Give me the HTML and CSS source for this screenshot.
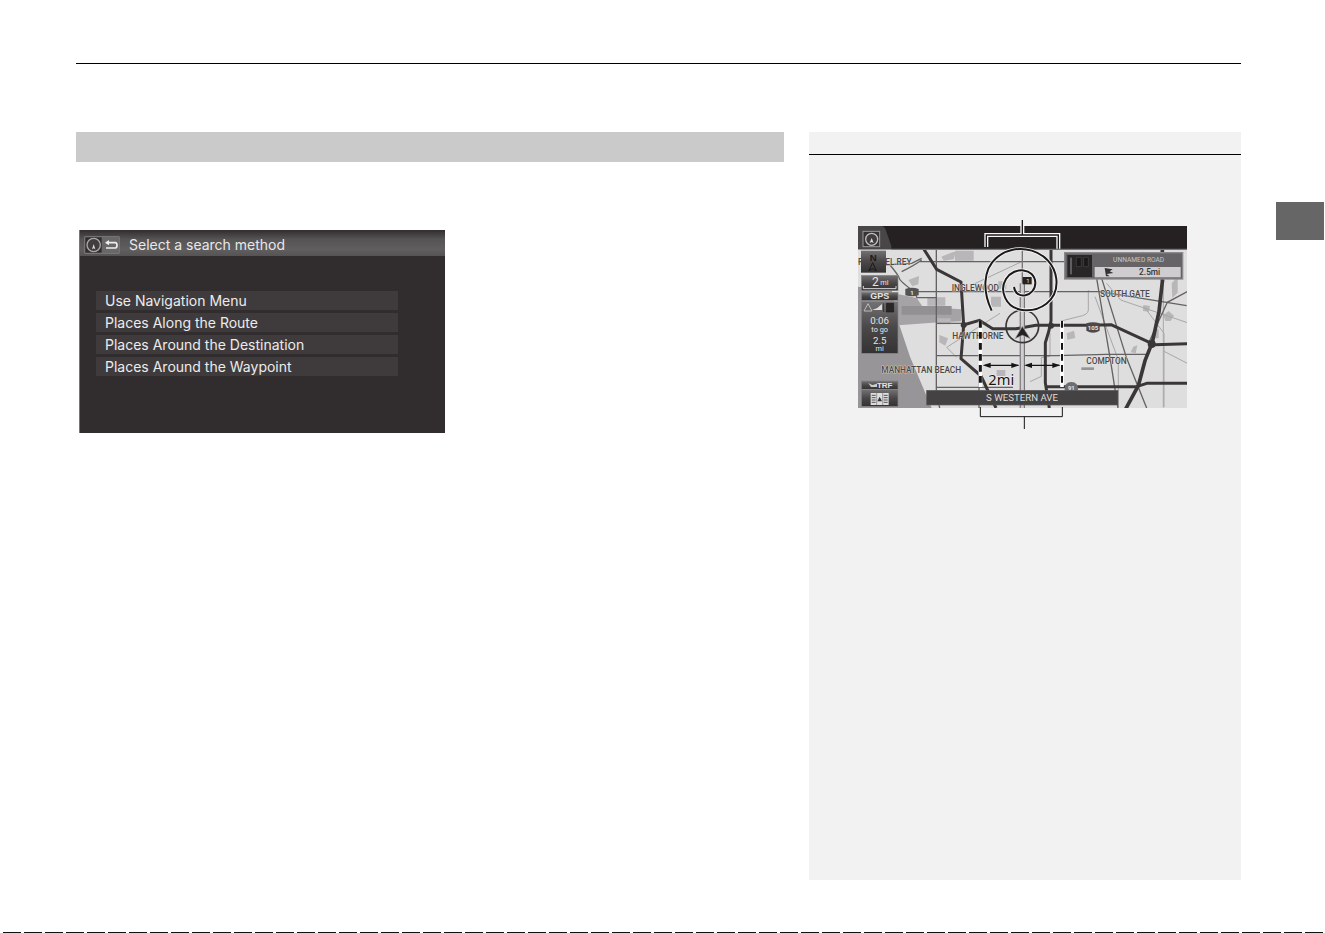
FILE: index.html
```html
<!DOCTYPE html>
<html lang="en">
<head>
<meta charset="utf-8">
<meta name="viewport" content="width=device-width, initial-scale=1">
<title>Select a search method</title>
<link rel="stylesheet" href="styles.css">
</head>
<body>
<div class="page">
  <header class="page-rule"></header>
  <div class="columns">
    <main class="content">
      <div class="section-bar"></div>
      <section class="device">
        <div class="device-head">
          <button class="back" type="button" aria-label="Back">
            <svg viewBox="0 0 108 54" aria-hidden="true">
              <rect x="1" y="1" width="106" height="52" rx="4" fill="#696767" stroke="#858383" stroke-width="2"/>
              <rect x="4" y="4" width="49" height="46" fill="#312d2e"/>
              <circle cx="29" cy="27" r="20" fill="#413d3e" stroke="#aaa8a8" stroke-width="4"/>
              <path d="M29 24l5 16-5-3-5 3z" fill="#ddd"/>
              <path d="M68 20h26q5 0 5 8t-5 8H66" fill="none" stroke="#eee" stroke-width="5"/>
              <path d="M63 20l12-8v16z" fill="#eee"/>
            </svg>
          </button>
          <h1 class="device-title">Select a search method</h1>
        </div>
        <div class="menu">
          <button class="menu-item" type="button">Use Navigation Menu</button>
          <button class="menu-item" type="button">Places Along the Route</button>
          <button class="menu-item" type="button">Places Around the Destination</button>
          <button class="menu-item" type="button">Places Around the Waypoint</button>
        </div>
      </section>
    </main>
    <aside class="notes">
      <div class="notes-head"></div>
      <svg class="map" viewBox="0 0 1035 675" role="img" aria-label="Route map with search range">
        <defs>
          <clipPath id="screen"><rect x="24" y="48" width="987" height="546"/></clipPath>
          <linearGradient id="btn" x1="0" y1="0" x2="0" y2="1">
            <stop offset="0" stop-color="#737172"/><stop offset=".5" stop-color="#4a4748"/><stop offset="1" stop-color="#353233"/>
          </linearGradient>
        </defs>
        <g clip-path="url(#screen)">
          <rect x="24" y="48" width="987" height="546" fill="#dedede"/>
          <path d="M24 230L125 240 148 345 180 440 245 594H24z" fill="#979597"/>
          <path d="M142 252l58 12 18 26 115 8v36l-85 4-104 8z" fill="#a5a3a5"/>
          <path d="M175 210l32-12-2 25-18 6zM232 262h54v25h-54zM274 140l45-18-8 26-30 4zM262 325h40v18h-40zM315 122h56v30h-56zM423 260h30v30h-30zM445 214h24v22h-24zM268 375l26 10-8 22-18-10zM440 480h26v18h-26zM940 315l16-12 16 14-10 16h-16zM880 285l20 3-3 17-18-2zM650 370l22-8 4 22-24 5zM910 362l16-5v28h-12zM965 220l18-20v48l-16 16zM850 410l12-4-5 24-15-3z" fill="#b8b6b8"/>
          <path d="M155 288h150v26H155z" fill="#929092"/>
          <g fill="none" stroke="#a9a7a9" stroke-width="3">
            <path d="M290 412l160-102M290 412l30 30M370 223L515 155M770 220l42 50 200 68M715 240v60q0 15-30 20l-55 14M735 260l70 190v142M940 210v382M882 290l60 80v222M540 515l34-16v-56l26-4V370M880 125l65 90M942 424l70 36M388 440v80"/>
          </g>
          <g fill="none" stroke="#656264" stroke-width="4">
            <path d="M259 120V540l10 54M210 155h440M200 245h550l260 42M259 340h80M259 437h360l150-4h120M259 532h230M387 500v94M740 205l42 250 22 140M755 205l75 240 60 149M1012 245l-60 32-55 120M100 165l85-5 30-15M120 165q25 30 28 40t45 40l8 18h58M155 185q40-20 60-35M24 155l76 10"/>
          </g>
          <g fill="none" stroke="#3b3739" stroke-width="9" stroke-linejoin="round">
            <path d="M222 118l38 60 73 38 8 130-8 100 60 52 45 96M340 345l48-14 40 25h70l60-10h160l65-2 130 60 107-3M603 118v215q-5 30-17 65v120l12 76M592 530h268l30-10h121"/>
            <path d="M937 120v95l-10 90-20 92-22 55-20 75-38 70" stroke-width="11"/>
          </g>
          <circle cx="341" cy="345" r="9" fill="#3b3739"/><circle cx="603" cy="347" r="9" fill="#3b3739"/><circle cx="905" cy="402" r="12" fill="#3b3739"/>
          <path d="M517 220v374" stroke="#777577" stroke-width="16"/>
          <path d="M517 220v374" stroke="#cfcdcf" stroke-width="9"/>
          <path d="M517 118v102" stroke="#777577" stroke-width="4"/>
          <g class="place">
            <text x="24" y="165">F</text><text x="106" y="165">EL REY</text>
            <text x="305" y="243">INGLEWOOD</text>
            <text x="307" y="388">HAWTHORNE</text>
            <text x="94" y="489">MANHATTAN BEACH</text>
            <text x="750" y="261">SOUTH GATE</text>
            <text x="709" y="462">COMPTON</text>
          </g>
          <path d="M694 472h38v8h-38z" fill="#969496"/>
          <path d="M166 237q20-8 40 0v19q-20 6-40 0z" fill="#555254"/><text x="186" y="254" class="tiny mid light">1</text>
          <path d="M709 340q20-7 40 0v22q-20 12-40 0z" fill="#4c494b"/><text x="729" y="359" class="tiny mid light">105</text>
          <path d="M644 542q-2-26 20-26t20 26z" fill="#6e6c6e"/><text x="664" y="539" class="tiny mid light">91</text>
          <path d="M24 48h987v70H24z" fill="#252122"/>
          <path d="M24 48h72q10 2 14 20l14 40v10H24z" fill="#494647"/>
          <path d="M124 118h887" stroke="#777577" stroke-width="4"/>
          <rect x="39" y="64" width="50" height="46" fill="#373334" stroke="#999799" stroke-width="3"/>
          <circle cx="65" cy="88" r="18" fill="#403d3e" stroke="#bebcbe" stroke-width="4"/>
          <path d="M65 84l6 15-6-3-6 3z" fill="#ddd"/>
          <rect x="33" y="122" width="75" height="66" fill="url(#btn)"/>
          <text x="70" y="153" class="mid north">N</text>
          <path d="M68 158l11 24-11-6-11 6z" fill="none" stroke="#1d191a" stroke-width="3"/>
          <g fill="url(#btn)" stroke="#888688" stroke-width="2">
            <rect x="34" y="196" width="110" height="46"/><rect x="34" y="247" width="110" height="24"/>
            <rect x="34" y="275" width="110" height="155"/><rect x="34" y="513" width="110" height="25"/><rect x="34" y="539" width="110" height="50"/>
          </g>
          <path d="M40 228v8h98v-8" fill="none" stroke="#ddd" stroke-width="3"/>
          <text x="66" y="227" class="big light">2</text><text x="91" y="225" class="small light">mi</text>
          <text x="89" y="268" class="mid gps light">GPS</text>
          <path d="M42 303l12-22 12 22z" fill="none" stroke="#bbb" stroke-width="3"/>
          <path d="M66 300h30v-18l-14 12z" fill="#ddd"/><path d="M101 280v26M109 280h22v26h-22z" stroke="#1e1b1c" stroke-width="2" fill="#292627"/>
          <g class="mid light">
            <text x="89" y="343" class="value">0:06</text><text x="89" y="366" class="small">to go</text>
            <text x="89" y="402" class="value">2.5</text><text x="89" y="424" class="small">mi</text>
            <text x="104" y="534" class="trf">TRF</text>
          </g>
          <path d="M55 519l12 6 14-4v10H63z" fill="#ccc"/>
          <path d="M62 549h54v36H62z" fill="#ddd"/>
          <path d="M65 556h12M65 563h12M65 570h12M65 577h12M101 556h12M101 563h12M101 570h12M101 577h12" stroke="#555" stroke-width="3"/>
          <path d="M80 549v36M98 549v36" stroke="#777" stroke-width="2"/>
          <path d="M89 560l7 14H82z" fill="#333"/>
          <rect x="644" y="128" width="354" height="79" fill="#666466" stroke="#8b898b" stroke-width="4"/>
          <rect x="652" y="135" width="74" height="66" fill="#292627"/>
          <path d="M663 143v50" stroke="#999" stroke-width="3"/><path d="M679 142h15v28h-15zM701 142h14v28h-14z" fill="#1b1819" stroke="#4b484a" stroke-width="2"/>
          <rect x="734" y="171" width="258" height="31" fill="#cfcdcf"/>
          <text x="866" y="156" class="road mid">UNNAMED ROAD</text>
          <text x="899" y="196" class="distance mid">2.5mi</text>
          <path d="M764 174l24 4-9 6 11 5-20 3 9 7h-11z" fill="#353233"/>
          <rect x="230" y="541" width="574" height="44" fill="#454244" stroke="#5d5a5c" stroke-width="2"/>
          <text x="516" y="573" class="avenue mid">S WESTERN AVE</text>
        </g>
        <circle cx="517" cy="349" r="49" fill="none" stroke="#3b3739" stroke-width="5"/>
        <path d="M517 349l24 37-24-10-22 10z" fill="#252122" stroke="#aaa" stroke-width="2"/>
        <path d="M518 201h27v22h-27z" fill="#252122"/><text x="534" y="219" class="flag mid light">1</text>
        <g fill="none" stroke="#f7f7f7">
          <path d="M425 302C398 246 398 180 438 145C494 91 608 117 619 207C626 273 568 308 512 299C467 291 447 241 468 207C492 168 554 174 556 218C557 259 498 273 492 231" stroke-width="11"/>
          <path d="M409 111V75H625V116M517 48v27" stroke-width="12"/>
        </g>
        <g fill="none" stroke="#1d191a">
          <path d="M425 302C398 246 398 180 438 145C494 91 608 117 619 207C626 273 568 308 512 299C467 291 447 241 468 207C492 168 554 174 556 218C557 259 498 273 492 231" stroke-width="6"/>
          <path d="M409 111V75H625V116M517 30v45" stroke-width="4"/>
        </g>
        <path d="M391 333v198M636 333v198" stroke="#fff" stroke-width="11"/>
        <path d="M391 333v198" stroke="#171415" stroke-width="9" stroke-dasharray="20 13"/>
        <path d="M636 333v198" stroke="#171415" stroke-width="6" stroke-dasharray="20 13"/>
        <path d="M405 466h100M530 466h98" stroke="#171415" stroke-width="4"/>
        <path d="M398 466l24-8v16zM508 466l-24-8v16zM522 466l24-8v16zM631 466l-24-8v16z" fill="#171415"/>
        <text x="415" y="525" class="range">2mi</text>
        <path d="M391 591v29h246v-29M523 620v37" fill="none" stroke="#171415" stroke-width="3"/>
      </svg>
    </aside>
    <div class="thumb-tab"></div>
  </div>
  <footer class="page-end"></footer>
</div>
</body>
</html>
```
FILE: styles.css
```css
* { box-sizing: border-box; }
body { margin: 0; background: #fff; font-family: Inter, "Liberation Sans", sans-serif; }
.page { min-height: 100vh; display: flex; flex-direction: column; }
.page-rule { margin: 63px 84px 68px 76px; border-top: 1px solid #000; }
.columns {
  flex: 1;
  display: grid;
  grid-template-columns: 708fr 25px 432fr 35px 48px;
  padding: 0 1px 52px 76px;
}
.content { grid-column: 1; }
.section-bar { height: 30px; background: #cacaca; }
.device {
  width: 366px;
  max-width: 100%;
  margin: 68px 0 0 3px;
  padding-bottom: 57px;
  background: #312d2e;
  border-left: 1px solid #777;
}
.device-head {
  display: flex;
  align-items: center;
  gap: 9px;
  height: 26px;
  padding: 4px 4px 0;
  background: linear-gradient(#312d2e, #555354 35%, #605e5f 75%, #555354);
}
.back { width: 36px; height: 18px; padding: 0; border: 0; background: none; }
.back svg { display: block; width: 100%; height: 100%; }
.device-title { margin: 0; font-size: 14px; line-height: 18px; font-weight: 400; color: #e8e8e8; }
.menu { display: grid; gap: 3px; padding: 35px 47px 0 16px; }
.menu-item {
  height: 19px;
  padding: 0 9px;
  border: 0;
  background: #3f3b3c;
  color: #ececec;
  font: 400 14px/19px Inter, "Liberation Sans", sans-serif;
  text-align: left;
}
.notes { grid-column: 3; background: #f2f2f2; }
.notes-head { height: 23px; border-bottom: 1px solid #000; }
.map { display: block; width: 80%; max-width: 345px; margin: 55px auto 0 41px; font-family: Roboto, "Liberation Sans", sans-serif; }
.place { font-size: 25px; font-weight: 500; fill: #4a4749; stroke: #e6e6e6; stroke-width: 2px; paint-order: stroke; }
.mid { text-anchor: middle; }
.light { fill: #e4e4e4; }
.tiny { font-size: 18px; font-weight: 700; }
.small { font-size: 22px; }
.big { font-size: 36px; }
.value { font-size: 29px; }
.gps, .trf { font-family: "Liberation Sans", sans-serif; font-size: 27px; font-weight: 700; }
.trf { font-size: 24px; }
.north { font-family: "Liberation Sans", sans-serif; font-size: 29px; font-weight: 700; fill: #1d191a; }
.road { font-size: 20px; fill: #c6c4c6; }
.distance { font-size: 25px; font-weight: 500; fill: #353233; }
.avenue { font-size: 29px; fill: #dddddd; }
.flag { font-size: 18px; }
.range { font-family: "Noto Sans", sans-serif; font-size: 44px; fill: #171415; stroke: #eee; stroke-width: 4px; paint-order: stroke; }
.thumb-tab { grid-column: 5; height: 38px; margin-top: 70px; background: #666; }
.page-end {
  height: 1px;
  background: repeating-linear-gradient(90deg, #fff 0 3px, #111 3px 21px);
}
```
